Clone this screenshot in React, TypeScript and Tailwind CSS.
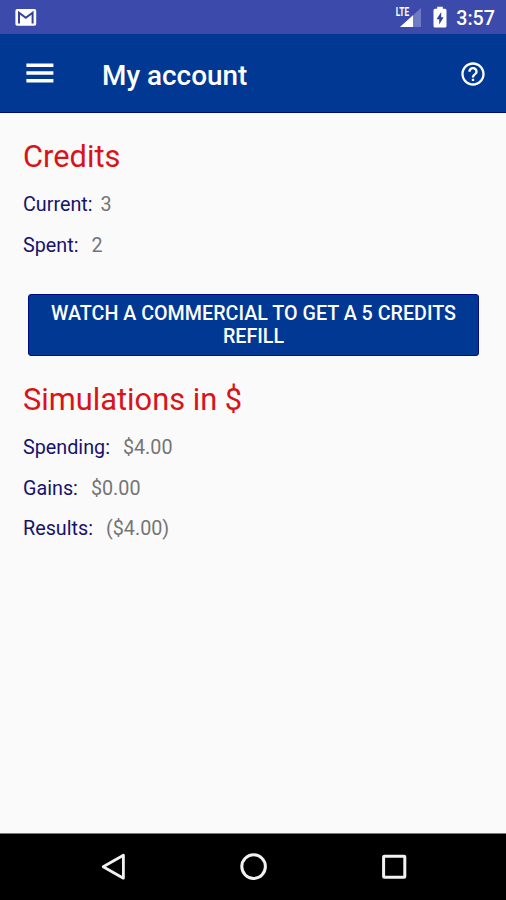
import React from 'react';

interface RowProps {
  label: string;
  value: string;
  gap: string;
}

const credits: RowProps[] = [
  { label: 'Current:', value: '3', gap: 'ml-[8px]' },
  { label: 'Spent:', value: '2', gap: 'ml-[13px]' },
];

const simulations: RowProps[] = [
  { label: 'Spending:', value: '$4.00', gap: 'ml-[13px]' },
  { label: 'Gains:', value: '$0.00', gap: 'ml-[13px]' },
  { label: 'Results:', value: '($4.00)', gap: 'ml-[13px]' },
];

function Row({ label, value, gap }: RowProps) {
  return (
    <div className="flex h-[40.7px] items-center text-[19.75px] leading-none whitespace-nowrap">
      <span className="text-[#17126b]">{label}</span>
      <span className={`text-[#757575] ${gap}`}>{value}</span>
    </div>
  );
}

function StatusBar() {
  return (
    <div className="flex h-[34px] items-center justify-between bg-[#3c4bab] pl-[15px] pr-[11px] text-white">
      <svg width="22" height="18" viewBox="0 0 22 18" className="shrink-0">
        <rect x="0.4" y="0.9" width="20.8" height="16.8" rx="1.8" fill="#fff" />
        <path d="M4 15.5V4.7L10.8 9.7L17.6 4.7V15.5" fill="none" stroke="#34409e" strokeWidth="2" />
      </svg>
      <div className="flex items-center">
        <svg width="28" height="22" viewBox="0 0 28 22">
          <path d="M26 2V21H5Z" fill="#6f7ac4" />
          <path d="M5 21L18 9.2V21Z" fill="#fff" />
          <rect x="0" y="0" width="14.5" height="11" fill="#3c4bab" />
          <text x="0.8" y="9.8" fill="#fff" fontFamily="Roboto, sans-serif" fontSize="12" fontWeight="700" textLength="13.4" lengthAdjust="spacingAndGlyphs">LTE</text>
        </svg>
        <svg width="14" height="22" viewBox="0 0 14 22" className="ml-[10px]">
          <path d="M4.2 0.8h5.6v2h2.2q1.5 0 1.5 1.5v15.8q0 1.5-1.5 1.5H2q-1.5 0-1.5-1.5V4.3q0-1.5 1.5-1.5h2.2Z" fill="#fff" />
          <path d="M8.2 6.1L3.5 13.3h2.7v5.2L10.6 11.3H8.2Z" fill="#34409e" />
        </svg>
        <span className="ml-[9px] pt-[3px] text-[19.7px] leading-none font-medium">3:57</span>
      </div>
    </div>
  );
}

function AppBar() {
  return (
    <header className="flex h-[79px] items-center border-b border-[#000c78] bg-[#003893] pl-[26px] pr-[19px] text-white">
      <button aria-label="Menu">
        <svg width="28" height="20" viewBox="0 0 28 20" className="block">
          <path d="M0.4 2.3H27.4M0.4 10H27.4M0.4 17.7H27.4" stroke="currentColor" strokeWidth="3.6" />
        </svg>
      </button>
      <h1 className="ml-[48px] pt-[5px] text-[27.9px] leading-none font-medium">My account</h1>
      <button aria-label="Help" className="ml-auto pt-px">
        <svg width="28" height="28" viewBox="0 0 24 24" fill="currentColor" className="block">
          <path d="M11 18h2v-2h-2v2zm1-16C6.48 2 2 6.48 2 12s4.48 10 10 10 10-4.48 10-10S17.52 2 12 2zm0 18c-4.41 0-8-3.59-8-8s3.59-8 8-8 8 3.59 8 8-3.59 8-8 8zm0-14c-2.21 0-4 1.79-4 4h2c0-1.1.9-2 2-2s2 .9 2 2c0 2-3 1.75-3 5h2c0-2.25 3-2.5 3-5 0-2.21-1.79-4-4-4z" />
        </svg>
      </button>
    </header>
  );
}

function NavigationBar() {
  return (
    <nav className="flex h-[67px] items-center border-t border-[#777] bg-black pl-[100px] text-[#f2f2f2]">
      <svg width="28" height="30" viewBox="0 0 28 30" fill="none" stroke="currentColor" strokeWidth="2.8" strokeLinejoin="round">
        <path d="M23.4 3.2V26.2L3.2 14.7Z" />
      </svg>
      <svg width="30" height="30" viewBox="0 0 30 30" fill="none" stroke="currentColor" strokeWidth="3" className="ml-[111px]">
        <circle cx="14.6" cy="14.6" r="11.8" />
      </svg>
      <svg width="28" height="28" viewBox="0 0 28 28" fill="none" stroke="currentColor" strokeWidth="3" className="ml-[111px]">
        <rect x="3.6" y="3.2" width="21.2" height="21" rx="0.8" />
      </svg>
    </nav>
  );
}

export default function App() {
  return (
    <div className="flex h-[900px] w-[506px] flex-col overflow-hidden bg-[#fafafa] font-[Roboto,sans-serif]">
      <StatusBar />
      <AppBar />
      <main className="flex-1 px-[23px] pt-[26px]">
        <h2 className="text-[30.8px] leading-[36px] text-[#d91418]">Credits</h2>
        <div className="mt-[9.5px]">
          {credits.map((row) => (
            <Row key={row.label} {...row} />
          ))}
        </div>
        <button className="mx-[5px] mt-[28.1px] block h-[62px] w-[451px] rounded-[3px] border border-[#000c86] bg-[#003893] px-4 pt-[1px] text-[19.7px] leading-[23px] font-medium text-white uppercase">
          Watch a commercial to get a 5 credits refill
        </button>
        <h2 className="mt-[26px] text-[30.8px] leading-[36px] text-[#d91418]">Simulations in $</h2>
        <div className="mt-[9.5px]">
          {simulations.map((row) => (
            <Row key={row.label} {...row} />
          ))}
        </div>
      </main>
      <NavigationBar />
    </div>
  );
}
